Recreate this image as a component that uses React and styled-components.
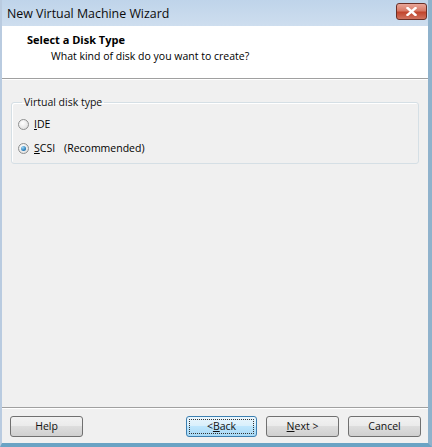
import React from 'react';
import styled, { createGlobalStyle } from 'styled-components';

const GlobalStyle = createGlobalStyle`
    html, body {
        margin: 0;
        padding: 0;
        background: #fff;
    }
    body {
        font-family: "Open Sans", "Noto Sans", "DejaVu Sans", sans-serif;
        font-size: 10.5px;
        color: #000;
    }
`;

const Window = styled.div`
    width: 432px;
    height: 447px;
    box-sizing: border-box;
    display: flex;
    flex-direction: column;
    background: linear-gradient(to bottom, #bfd4ea, #d6e3f1 40px);
    border-left: 2px solid #b9cbe0;
    border-right: 4px solid #8fb2cc;
    border-bottom: 4px solid #6aa3c4;
`;

const TitleBar = styled.div`
    height: 26px;
    flex: none;
    display: flex;
    align-items: center;
    justify-content: space-between;
    padding: 0 0 0 5px;
`;

const TitleText = styled.span`
    font-size: 12.4px;
    color: #0b0b0b;
`;

const CloseButton = styled.div`
    width: 31px;
    height: 17px;
    margin: 0 1px 4px 0;
    box-sizing: border-box;
    border: 1px solid #6b2f26;
    border-radius: 3px;
    background: linear-gradient(to bottom, #e9a699 0%, #d77a67 45%, #c1452d 55%, #d0735f 100%);
    display: flex;
    align-items: center;
    justify-content: center;
`;

const Body = styled.div`
    flex: 1;
    display: flex;
    flex-direction: column;
    background: #f0f0f0;
`;

const Header = styled.div`
    height: 53px;
    flex: none;
    box-sizing: border-box;
    background: #fff;
    border-bottom: 1px solid #a0a0a0;
    box-shadow: 0 1px 0 #fff;
    padding: 6px 0 0 25px;
`;

const HeaderTitle = styled.div`
    font-weight: 700;
    font-size: 11px;
    line-height: 16px;
`;

const HeaderSub = styled.div`
    padding-left: 24px;
    font-size: 10.5px;
    line-height: 16px;
`;

const Content = styled.div`
    flex: 1;
    padding: 16px 9px 0 9px;
`;

const GroupBox = styled.fieldset`
    margin: 0;
    padding: 3px 0 8px 6px;
    height: 56px;
    border: 1px solid #d5dfe5;
    border-radius: 3px;
    box-shadow: inset 1px 1px 0 #fff;
`;

const Legend = styled.legend`
    padding: 0 2px;
    margin-left: 4px;
    font-size: 10.5px;
    color: #111;
`;

const RadioRow = styled.label`
    display: flex;
    align-items: center;
    height: 24px;
    gap: 5px;
    font-size: 10.5px;
`;

const RadioDot = styled.span`
    width: 11px;
    height: 11px;
    box-sizing: border-box;
    border-radius: 50%;
    border: 1px solid #8e8f8f;
    background: radial-gradient(circle at 40% 35%, #ffffff, #d8d8d8);
    display: flex;
    align-items: center;
    justify-content: center;

    &::after {
        content: '';
        display: ${(p) => (p.checked ? 'block' : 'none')};
        width: 5px;
        height: 5px;
        border-radius: 50%;
        background: radial-gradient(circle at 35% 30%, #9fd7f5, #1f77b6 70%, #0d4f85);
    }
`;

const Hint = styled.span`
    margin-left: 9px;
`;

const Footer = styled.div`
    height: 36px;
    flex: none;
    box-sizing: border-box;
    border-top: 1px solid #a0a0a0;
    box-shadow: inset 0 1px 0 #fff;
    display: flex;
    align-items: center;
    padding: 1px 7px 0 8px;
    gap: 9px;
`;

const Spacer = styled.div`
    flex: 1;
`;

const Button = styled.div`
    width: 73px;
    height: 21px;
    box-sizing: border-box;
    margin-left: ${(p) => (p.shift ? '2px' : '0')};
    width: ${(p) => (p.shift ? '71px' : '73px')};
    border: 1px solid ${(p) => (p.primary ? '#3c7fb1' : '#707070')};
    border-radius: 3px;
    background: ${(p) =>
        p.primary
            ? 'linear-gradient(to bottom, #eaf6fd 0%, #d9f0fc 45%, #bee6fd 50%, #a7d9f5 100%)'
            : 'linear-gradient(to bottom, #f2f2f2 0%, #ebebeb 45%, #dddddd 50%, #cfcfcf 100%)'};
    display: flex;
    align-items: center;
    justify-content: center;
    font-size: 10.5px;
    color: #111;
    position: relative;

    &::before {
        content: '';
        display: ${(p) => (p.focused ? 'block' : 'none')};
        position: absolute;
        inset: 2px;
        border: 1px dotted #333;
        border-radius: 1px;
    }
`;

const Key = styled.span`
    text-decoration: underline;
`;

const App = () => (
    <>
        <GlobalStyle />
        <Window>
            <TitleBar>
                <TitleText>New Virtual Machine Wizard</TitleText>
                <CloseButton>
                    <svg width="11" height="9" viewBox="0 0 11 9">
                        <path d="M1.5 1 L9.5 8 M9.5 1 L1.5 8" stroke="#fff" strokeWidth="2.4" strokeLinecap="square" />
                    </svg>
                </CloseButton>
            </TitleBar>
            <Body>
                <Header>
                    <HeaderTitle>Select a Disk Type</HeaderTitle>
                    <HeaderSub>What kind of disk do you want to create?</HeaderSub>
                </Header>
                <Content>
                    <GroupBox>
                        <Legend>Virtual disk type</Legend>
                        <RadioRow>
                            <RadioDot />
                            <span>
                                <Key>I</Key>DE
                            </span>
                        </RadioRow>
                        <RadioRow>
                            <RadioDot checked />
                            <span>
                                <Key>S</Key>CSI
                                <Hint>(Recommended)</Hint>
                            </span>
                        </RadioRow>
                    </GroupBox>
                </Content>
                <Footer>
                    <Button>Help</Button>
                    <Spacer />
                    <Button focused primary shift>
                        &lt; <Key>B</Key>ack
                    </Button>
                    <Button>
                        <Key>N</Key>ext &gt;
                    </Button>
                    <Button>Cancel</Button>
                </Footer>
            </Body>
        </Window>
    </>
);

export default App;
